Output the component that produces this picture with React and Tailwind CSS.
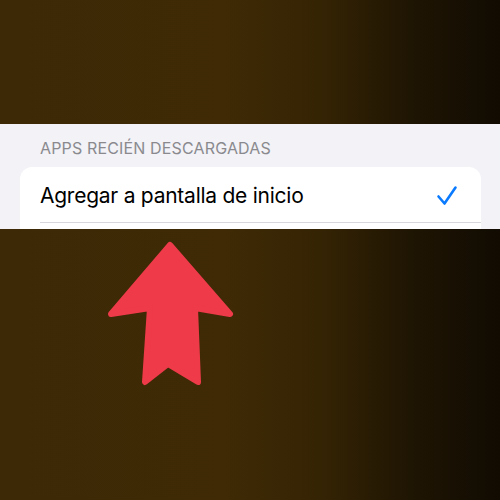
import React from 'react';

const Check = () => (
  <svg width="22" height="22" viewBox="0 0 22 22" fill="none">
    <path d="M2.5 11.5 L8.5 18.5 L19.5 2.5" stroke="#0a7aff" strokeWidth="2.6" strokeLinecap="round" strokeLinejoin="round" />
  </svg>
);

// big red arrow pointing up at the setting
const UpArrow = () => (
  <svg width="145" height="160" viewBox="0 0 145 160">
    <polygon
      points="70,10 130,79 95,73 98,147 68,129 45,147 50,73 11,79"
      fill="#ef3a4a"
      stroke="#ef3a4a"
      strokeWidth="6"
      strokeLinejoin="round"
    />
  </svg>
);

export default function App() {
  return (
    <div
      className="w-[500px] h-[500px] overflow-hidden flex flex-col bg-[linear-gradient(to_right,#3d2906_0%,#3f2a05_45%,#342304_65%,#1f1503_82%,#110b02_100%)]"
      style={{ fontFamily: 'Inter, "Noto Sans", sans-serif' }}
    >
      <div className="h-[124px] shrink-0" />

      <div className="h-[105px] shrink-0 bg-[#f2f2f7] overflow-hidden pt-[14px]">
        <div className="pl-[40px] text-[16px] leading-[20px] text-[#8a8a8e] tracking-[0.15px]">
          APPS RECIÉN DESCARGADAS
        </div>
        <div className="mt-[9px] ml-[20px] mr-[19px] bg-white rounded-t-[12px] h-[80px]">
          <div className="flex items-center justify-between pl-[20px] pr-[23px] pt-[16px] pb-[14px]">
            <span className="text-[21px] leading-[25px] text-black tracking-[-0.25px]">Agregar a pantalla de inicio</span>
            <Check />
          </div>
          <div className="ml-[20px] h-px bg-[#d8d8dc]" />
        </div>
      </div>

      <div className="pl-[100px] pt-[6px]">
        <UpArrow />
      </div>
    </div>
  );
}
